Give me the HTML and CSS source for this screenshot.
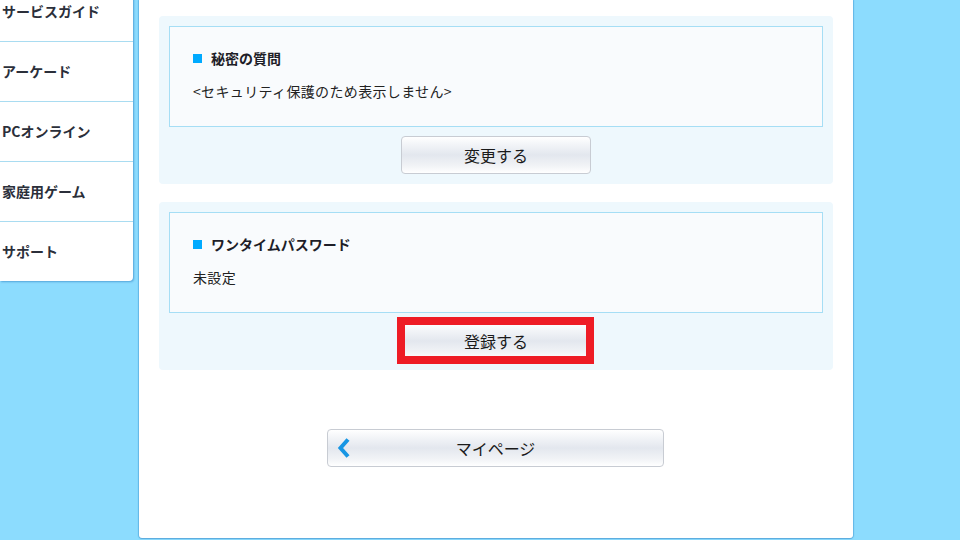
FILE: index.html
```html
<!DOCTYPE html>
<html lang="ja">
<head>
<meta charset="utf-8">
<title>セキュリティ設定</title>
<link rel="stylesheet" href="styles.css">
</head>
<body>
<div class="layout">
  <nav class="sidebar">
    <a class="nav-item">サービスガイド</a>
    <a class="nav-item">アーケード</a>
    <a class="nav-item">PCオンライン</a>
    <a class="nav-item">家庭用ゲーム</a>
    <a class="nav-item last">サポート</a>
  </nav>
  <main class="panel">
    <section class="section">
      <div class="info">
        <h2 class="info-title"><span class="square"></span>秘密の質問</h2>
        <p class="info-text">&lt;セキュリティ保護のため表示しません&gt;</p>
      </div>
      <div class="actions"><button class="btn">変更する</button></div>
    </section>
    <section class="section">
      <div class="info">
        <h2 class="info-title"><span class="square"></span>ワンタイムパスワード</h2>
        <p class="info-text">未設定</p>
      </div>
      <div class="actions"><button class="btn highlighted">登録する</button></div>
    </section>
    <div class="back-row">
      <button class="btn back">
        <svg class="chev" width="14" height="22" viewBox="0 0 14 22"><path d="M11 2.5 L3.5 11 L11 19.5" fill="none" stroke="#1796e4" stroke-width="4" stroke-linecap="butt" stroke-linejoin="miter"/></svg>
        <span>マイページ</span>
      </button>
    </div>
  </main>
</div>
</body>
</html>
```
FILE: styles.css
```css
html, body {
  margin: 0;
  padding: 0;
  height: 100%;
  overflow: hidden;
}
body {
  background: #8cdcfe;
  font-family: "Noto Sans CJK JP", "Noto Sans", sans-serif;
  color: #222;
}
.layout {
  display: flex;
  align-items: flex-start;
  gap: 6px;
}
.sidebar {
  width: 133px;
  margin-top: -18px;
  background: #fff;
  border-radius: 0 0 4px 0;
  box-shadow: 1px 1px 2px rgba(40, 120, 190, 0.55);
  display: flex;
  flex-direction: column;
}
.nav-item {
  display: block;
  height: 59px;
  line-height: 59px;
  padding-left: 2px;
  font-size: 14px;
  font-weight: bold;
  color: #2b2f3a;
  border-bottom: 1px solid #a9dcf1;
  white-space: nowrap;
}
.nav-item.last {
  border-bottom: none;
  height: 59px;
  line-height: 59px;
}
.panel {
  width: 714px;
  height: 538px;
  background: #fff;
  border-radius: 0 0 3px 3px;
  box-shadow: 0 1px 1px #5aa9dc, -1px 0 1px rgba(60, 150, 210, 0.5), 1px 0 1px rgba(60, 150, 210, 0.5);
  padding: 16px 20px 0;
  box-sizing: border-box;
  display: flex;
  flex-direction: column;
}
.section {
  background: #eef8fd;
  border-radius: 4px;
  padding: 10px 10px 10px;
  margin-bottom: 18px;
}
.info {
  background: #f9fbfd;
  border: 1px solid #a6def5;
  height: 99px;
  padding: 0 23px;
  box-sizing: content-box;
}
.info-title {
  margin: 0;
  padding-top: 21px;
  font-size: 14px;
  font-weight: bold;
  line-height: 20px;
  display: flex;
  align-items: center;
  color: #1e1e28;
}
.square {
  width: 9px;
  height: 9px;
  background: #00aaff;
  margin-right: 9px;
}
.info-text {
  margin: 13px 0 0;
  font-size: 14px;
  line-height: 20px;
  letter-spacing: 0.35px;
  color: #222;
}
.actions {
  display: flex;
  justify-content: center;
  padding-top: 9px;
}
.btn {
  width: 190px;
  height: 38px;
  border: 1px solid #c8ccd3;
  border-radius: 4px;
  background: linear-gradient(#ffffff 0%, #f3f5f8 20%, #e3e7ee 50%, #f1f3f6 80%, #ffffff 100%);
  font-family: "Noto Sans CJK JP", "Noto Sans", sans-serif;
  font-size: 16px;
  color: #1a1a1a;
  padding: 0;
  cursor: pointer;
}
.btn.highlighted {
  position: relative;
}
.btn.highlighted::after {
  content: "";
  position: absolute;
  left: -5px;
  right: -4px;
  top: -6px;
  bottom: -5px;
  border: 8px solid #ee1c25;
  pointer-events: none;
}
.back-row {
  display: flex;
  justify-content: center;
  padding-top: 41px;
  padding-right: 1px;
}
.btn.back {
  width: 337px;
  height: 38px;
  position: relative;
  display: flex;
  align-items: center;
  justify-content: center;
}
.chev {
  position: absolute;
  left: 9px;
  top: 7px;
}
```
